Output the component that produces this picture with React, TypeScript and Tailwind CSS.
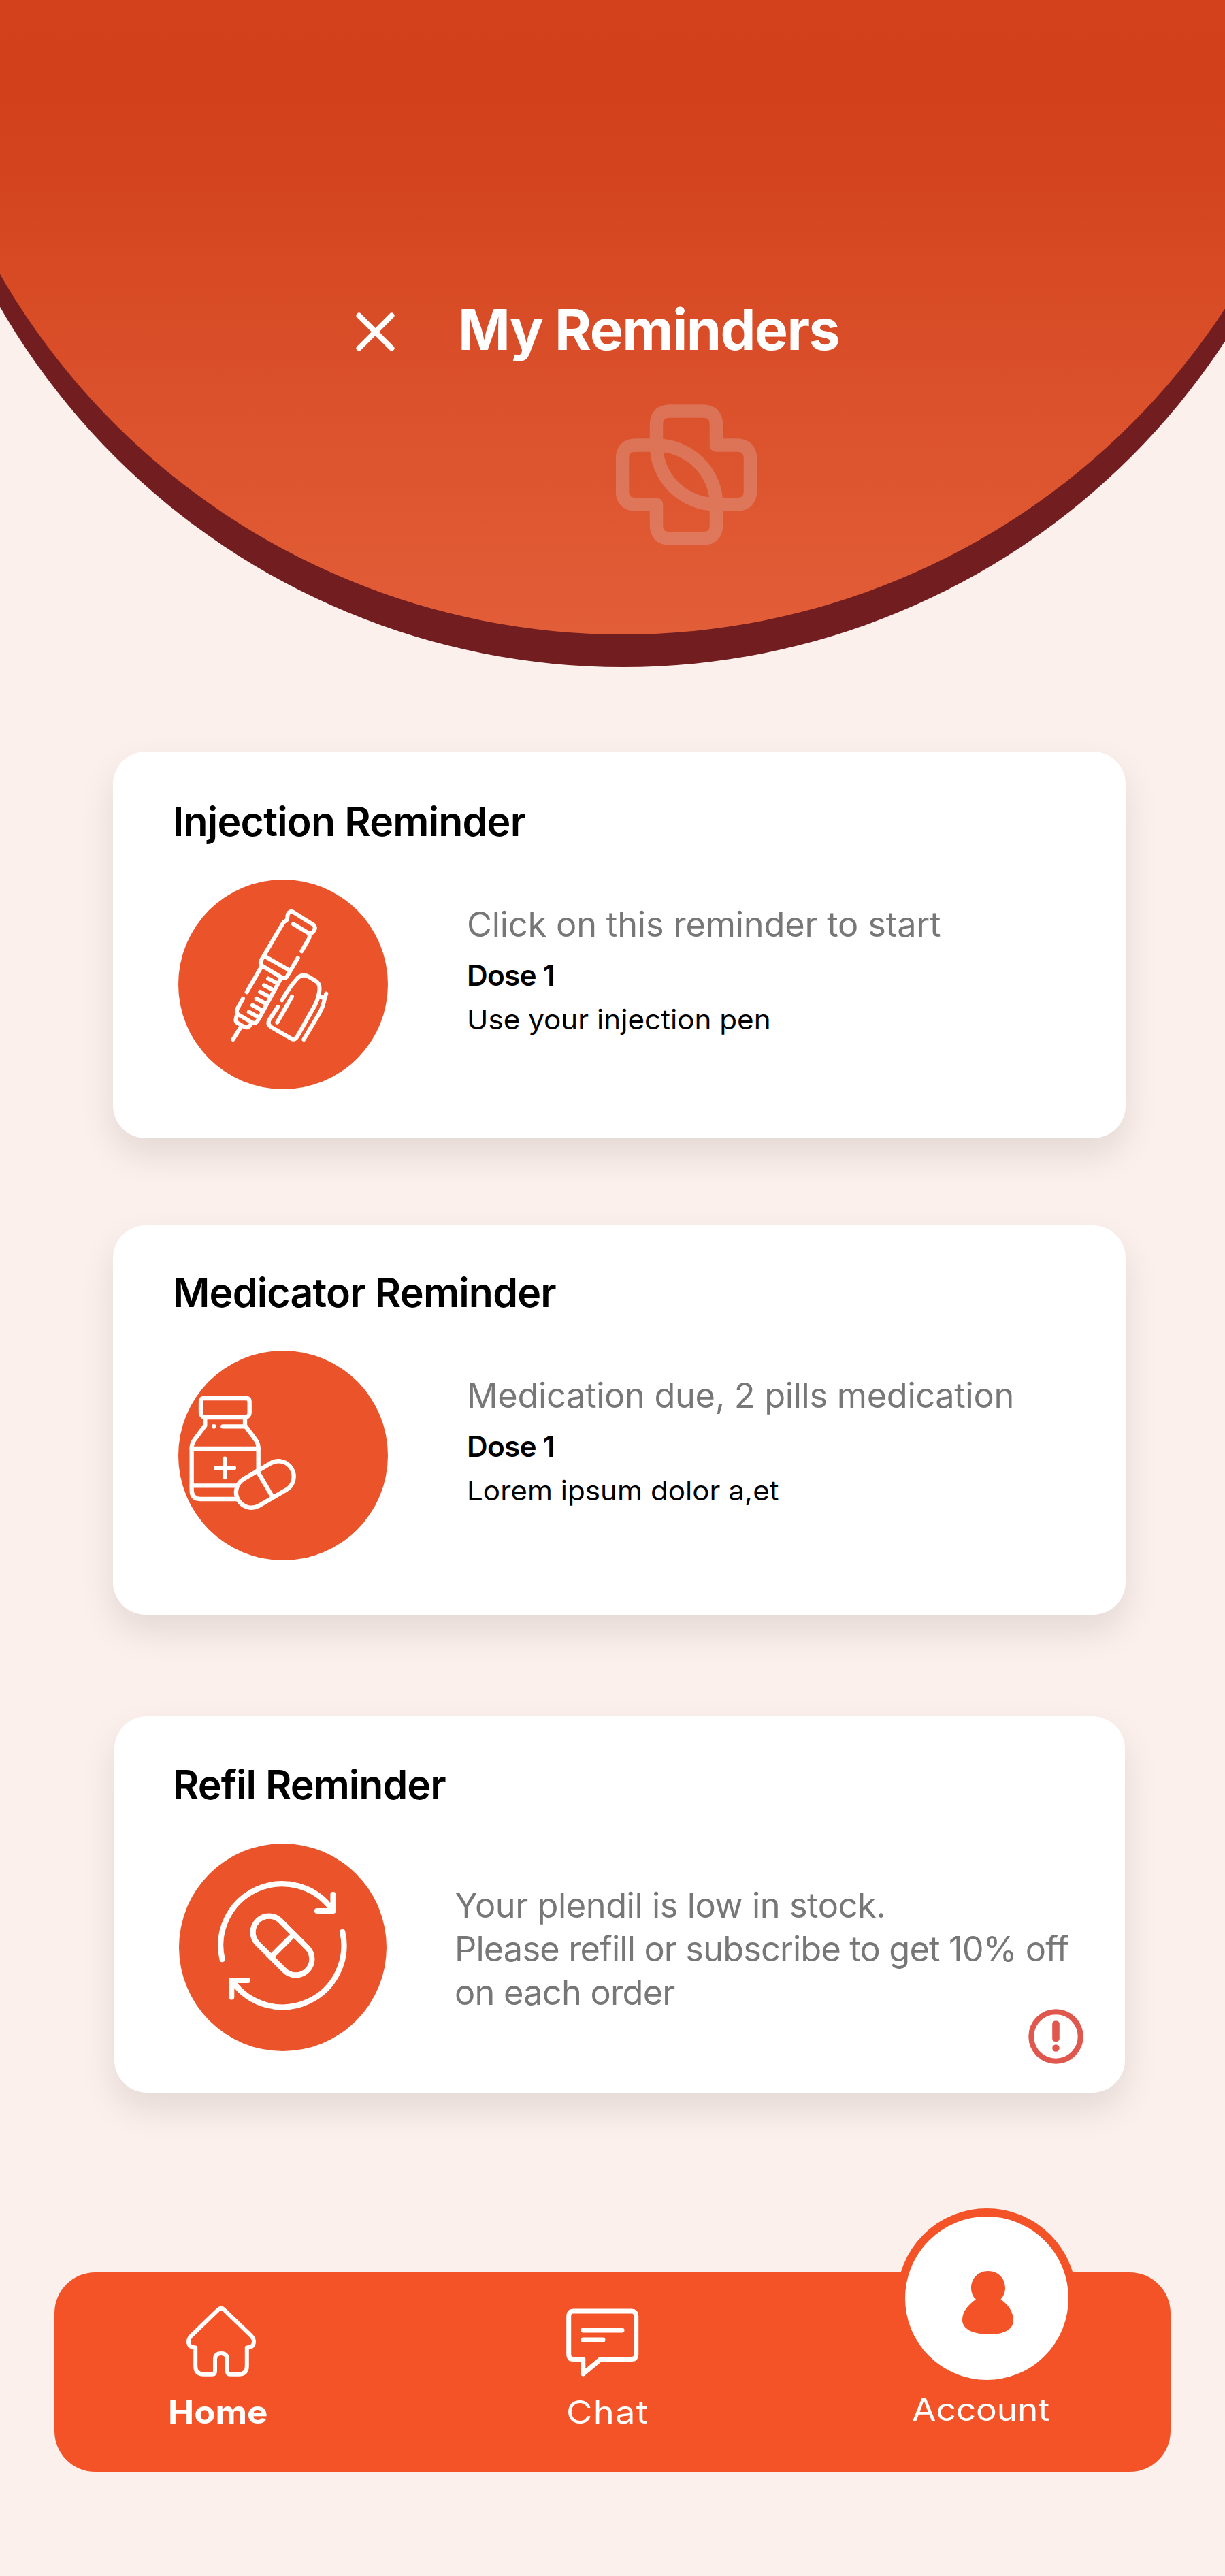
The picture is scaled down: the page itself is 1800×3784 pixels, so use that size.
import type { ReactNode } from "react";

function CloseIcon() {
  return (
    <svg className="mt-1.5 h-[57px] w-[57px] shrink-0" viewBox="0 0 57 57" fill="none" stroke="#fff" strokeWidth="8" strokeLinecap="round">
      <path d="M4.5 4.5 52.5 52.5M52.5 4.5 4.5 52.5" />
    </svg>
  );
}

function CrossLogo() {
  return (
    <svg className="h-[207px] w-[207px]" viewBox="905.5 594 207 207" fill="none" stroke="#e0f5ff" strokeWidth="19.5" strokeLinejoin="round" opacity="0.2">
      <path d="M965 654V624Q965 604 985 604H1033Q1053 604 1053 624V654H1083Q1103 654 1103 674V721Q1103 741 1083 741H1053A88 87 0 0 1 965 654H935Q915 654 915 674V721Q915 741 935 741H965V771Q965 791 985 791H1033Q1053 791 1053 771V741A88 87 0 0 0 965 654Z" />
    </svg>
  );
}

function InjectionPen() {
  return (
    <svg className="h-full w-full" viewBox="0 0 308 308" fill="none">
      <g transform="translate(44 28) scale(0.33333)" stroke="#fff" strokeWidth="18" strokeLinecap="round" strokeLinejoin="round">
        <path d="M412 232 442 180Q448 170 446 154L375 112M446 154Q457 153 463 146L468 138Q474 126 465 117Q463 114 458 112L379 62Q365 51 355 62Q350 67 349 80Q349 93 343 97Q334 101 328 111L233 272Q227 287 236 295L326 349Q337 353 346 345L395 262" />
        <path d="M249 254 356 315" />
        <path d="M233 302 170 412" />
        <path d="M320 352 224 528 214 543Q204 552 193 546L128 508" />
        <path d="M153 441 128 486Q123 497 128 508Q124 518 122 530Q119 540 128 547L162 567Q172 570 180 564L192 549" />
        <path d="M146 562 109 621" />
        <path d="M264 352 300 371M246 382 283 401M229 411 266 431M212 441 250 461M195 470 233 491M179 499 217 520" />
        <path d="M325 448C346 410 364 383 389 356C404 337 421 333 441 343L466 358C488 370 494 383 489 412C485 440 476 463 461 487L395 603Q385 622 374 620Q370 620 364 616L277 566Q258 552 270 533L307 477" />
        <path d="M369 432 304 545" />
        <path d="M520 419 513 440 490 431M513 440C509 465 500 488 487 510L421 621" />
      </g>
    </svg>
  );
}

function PillBottle() {
  return (
    <svg className="h-full w-full" viewBox="0 0 308 308" fill="none">
      <g transform="translate(4 56) scale(0.33333)" stroke="#fff" strokeWidth="19" strokeLinecap="round" strokeLinejoin="round">
        <path d="M102 42H287Q302 42 302 57V106Q302 114 297 119Q291 126 283 126H105Q97 126 92 119Q87 114 87 106V57Q87 42 102 42Z" />
        <path d="M106 130V162L60 224Q47 241 47 262V446Q47 486 86 486H250" strokeLinecap="butt" />
        <path d="M282 130V162L328 224Q341 241 341 262V362" strokeLinecap="butt" />
        <path d="M47 264H341M47 427H242" />
        <path d="M184 166H280" />
        <circle cx="145" cy="166" r="10" fill="#fff" stroke="none" />
        <path d="M193 308V390M153 349H234" />
        <rect x="233.5" y="353.5" width="273" height="136" rx="68" fill="#eb532a" transform="rotate(-30.3 370 421.5)" />
        <path d="M336 362 404 478" />
      </g>
    </svg>
  );
}

function RefillPill() {
  return (
    <svg className="h-full w-full" viewBox="0 0 305 305" fill="none" stroke="#fff" strokeWidth="8.2" strokeLinecap="round" strokeLinejoin="round">
      <path d="M63.6 170A90.3 90.3 0 0 1 225 97" />
      <path d="M226.5 75V99H203" />
      <path d="M240.2 130A90.3 90.3 0 0 1 79 203" />
      <path d="M77.2 225.5V201H101" />
      <rect x="100.5" y="126.3" width="103" height="47.4" rx="23.7" transform="rotate(45 152 150)" />
      <path d="M168.7 133.3 135.3 166.7" />
    </svg>
  );
}

function AlertIcon() {
  return (
    <svg className="absolute right-[61px] bottom-[42px] h-[81px] w-[81px]" viewBox="0 0 81 81" fill="none">
      <circle cx="40.5" cy="40.5" r="36.2" stroke="#e0574d" strokeWidth="8" />
      <rect x="35.2" y="17.5" width="10.6" height="30.5" rx="4.5" fill="#e0574d" />
      <circle cx="40.5" cy="57.5" r="5.3" fill="#e0574d" />
    </svg>
  );
}

function HomeIcon() {
  return (
    <svg className="ml-6 h-[110px] w-[110px]" viewBox="270 3384 110 110" fill="none" stroke="#fff" strokeWidth="6" strokeLinejoin="round">
      <path d="M320.500 3393Q325 3388.500 329.500 3393L369 3431Q373.500 3436 373 3441Q372 3448.500 362.800 3448.500V3475.500Q362.800 3487.700 351 3487.700H338Q334 3487.700 334 3483V3466Q334 3457 325 3457Q316 3457 316 3466V3483Q316 3487.700 312 3487.700H299Q287.200 3487.700 287.200 3475.500V3448.500Q278 3448.500 277 3441Q276.500 3436 281 3431Z" />
    </svg>
  );
}

function ChatIcon() {
  return (
    <svg className="h-[110px] w-[110px]" viewBox="832 3384 110 110" fill="none" stroke="#fff" strokeWidth="7" strokeLinejoin="round" strokeLinecap="round">
      <path d="M842.500 3395H928Q934.700 3395 934.700 3402V3459Q934.700 3465.500 928 3465.500H882.500L856.800 3487V3465.500H842.500Q835.700 3465.500 835.700 3459V3402Q835.700 3395 842.500 3395Z" />
      <path d="M856.800 3423H914M856.800 3437H886" />
    </svg>
  );
}

function PersonIcon() {
  return (
    <svg className="mt-[13px] ml-0.5 h-[93px] w-[75px]" viewBox="0 0 75 93" fill="#f45328">
      <path d="M38 0C53 0 63 11 63 25C63 32 60 38 56.500 41.500C68 50 75 60 75 73C75 86 60 93 41 93C15 93 0 85 0 72C0 60 8 50 20 41.500C15.500 38 13 32 13 25C13 11 23 0 38 0Z" />
    </svg>
  );
}

function Disc({ className, children }: { className: string; children: ReactNode }) {
  return <div className={`shrink-0 overflow-hidden rounded-full bg-[#eb532a] ${className}`}>{children}</div>;
}

const cardBase =
  "relative rounded-[48px] bg-white shadow-[0_24px_52px_rgba(20,0,10,0.1)]";
const cardTitle = "text-[59px] leading-[60px] font-semibold tracking-[-0.8px] text-black";
const body = "text-[50.5px] leading-[64px] text-[#777]";

export default function App() {
  return (
    <div className="flex h-[3784px] w-[1800px] flex-col overflow-hidden bg-[#fbf0ec] font-['Inter',sans-serif] whitespace-nowrap">
      <header className="relative h-[1000px] shrink-0 overflow-hidden">
        <div className="absolute top-[-1133px] left-[-141px] h-[2113px] w-[2113px] rounded-full bg-[#721d20]" />
        <div className="absolute top-[-1181px] left-[-141px] h-[2113px] w-[2113px] rounded-full bg-[linear-gradient(180deg,#d3411c_1181px,#d1401a_1320px,#e25e38_2113px)]" />
        <div className="relative pt-[442px]">
          <div className="flex items-center gap-[93px] pl-[523px]">
            <CloseIcon />
            <h1 className="text-[82.5px] leading-[84px] font-bold tracking-[-1.6px] text-white">My Reminders</h1>
          </div>
          <div className="mt-[68px] ml-[905px]">
            <CrossLogo />
          </div>
        </div>
      </header>

      <main className="mt-[104px] flex flex-col">
        <section className={`${cardBase} ml-[166px] h-[568px] w-[1488px] pt-[73px] pl-[88px]`}>
          <h2 className={cardTitle}>Injection Reminder</h2>
          <div className="mt-[55px] ml-2 flex gap-[116px]">
            <Disc className="size-[308px]">
              <InjectionPen />
            </Disc>
            <div className="pt-[34px]">
              <p className={`${body} tracking-[-0.18px]`}>Click on this reminder to start</p>
              <p className="mt-[13px] text-[42.5px] leading-[60px] font-semibold tracking-[-0.8px]">Dose 1</p>
              <p className="mt-[5px] origin-left scale-x-[1.055] text-[40px] leading-[60px]">Use your injection pen</p>
            </div>
          </div>
        </section>

        <section className={`${cardBase} mt-32 ml-[166px] h-[572px] w-[1488px] pt-[69px] pl-[88px]`}>
          <h2 className={cardTitle}>Medicator Reminder</h2>
          <div className="mt-[55px] ml-2 flex gap-[116px]">
            <Disc className="size-[308px]">
              <PillBottle />
            </Disc>
            <div className="pt-[34px]">
              <p className={`${body} tracking-[-0.32px]`}>Medication due, 2 pills medication</p>
              <p className="mt-[13px] text-[42.5px] leading-[60px] font-semibold tracking-[-0.8px]">Dose 1</p>
              <p className="mt-[5px] origin-left scale-x-[1.055] text-[40px] leading-[60px]">Lorem ipsum dolor a,et</p>
            </div>
          </div>
        </section>

        <section className={`${cardBase} mt-[149px] ml-[168px] h-[553px] w-[1485px] pt-[71px] pl-[86px]`}>
          <h2 className="text-[59px] leading-[60px] font-semibold tracking-[-0.95px] text-black">Refil Reminder</h2>
          <div className="mt-[56px] ml-[9px] flex gap-[100px]">
            <Disc className="size-[305px]">
              <RefillPill />
            </Disc>
            <div className="pt-[59px]">
              <p className={`${body} tracking-[-0.45px]`}>Your plendil is low in stock.</p>
              <p className={`${body} tracking-[-0.85px]`}>Please refill or subscribe to get 10% off</p>
              <p className={`${body} tracking-[-0.75px]`}>on each order</p>
            </div>
          </div>
          <AlertIcon />
        </section>
      </main>

      <nav className="mt-[264px] ml-[80px] flex h-[293px] w-[1640px] shrink-0 rounded-[60px] bg-[#f45328] text-[46px] leading-[60px] text-white">
        <a className="ml-[166px] flex w-[150px] flex-col pt-[46px]">
          <HomeIcon />
          <span className="mt-[19px] ml-px w-max origin-left scale-x-[1.11] font-bold">Home</span>
        </a>
        <a className="ml-[436px] flex w-[130px] flex-col pt-[46px]">
          <ChatIcon />
          <span className="mt-[19px] w-max origin-left scale-x-[1.14] tracking-[1.2px]">Chat</span>
        </a>
        <a className="mt-[-94px] ml-[356px] flex w-[264px] flex-col">
          <span className="flex size-[264px] items-center justify-center rounded-full border-12 border-[#f45328] bg-white">
            <PersonIcon />
          </span>
          <span className="mt-px ml-[22px] w-max origin-left scale-x-[1.115]">Account</span>
        </a>
      </nav>
    </div>
  );
}
